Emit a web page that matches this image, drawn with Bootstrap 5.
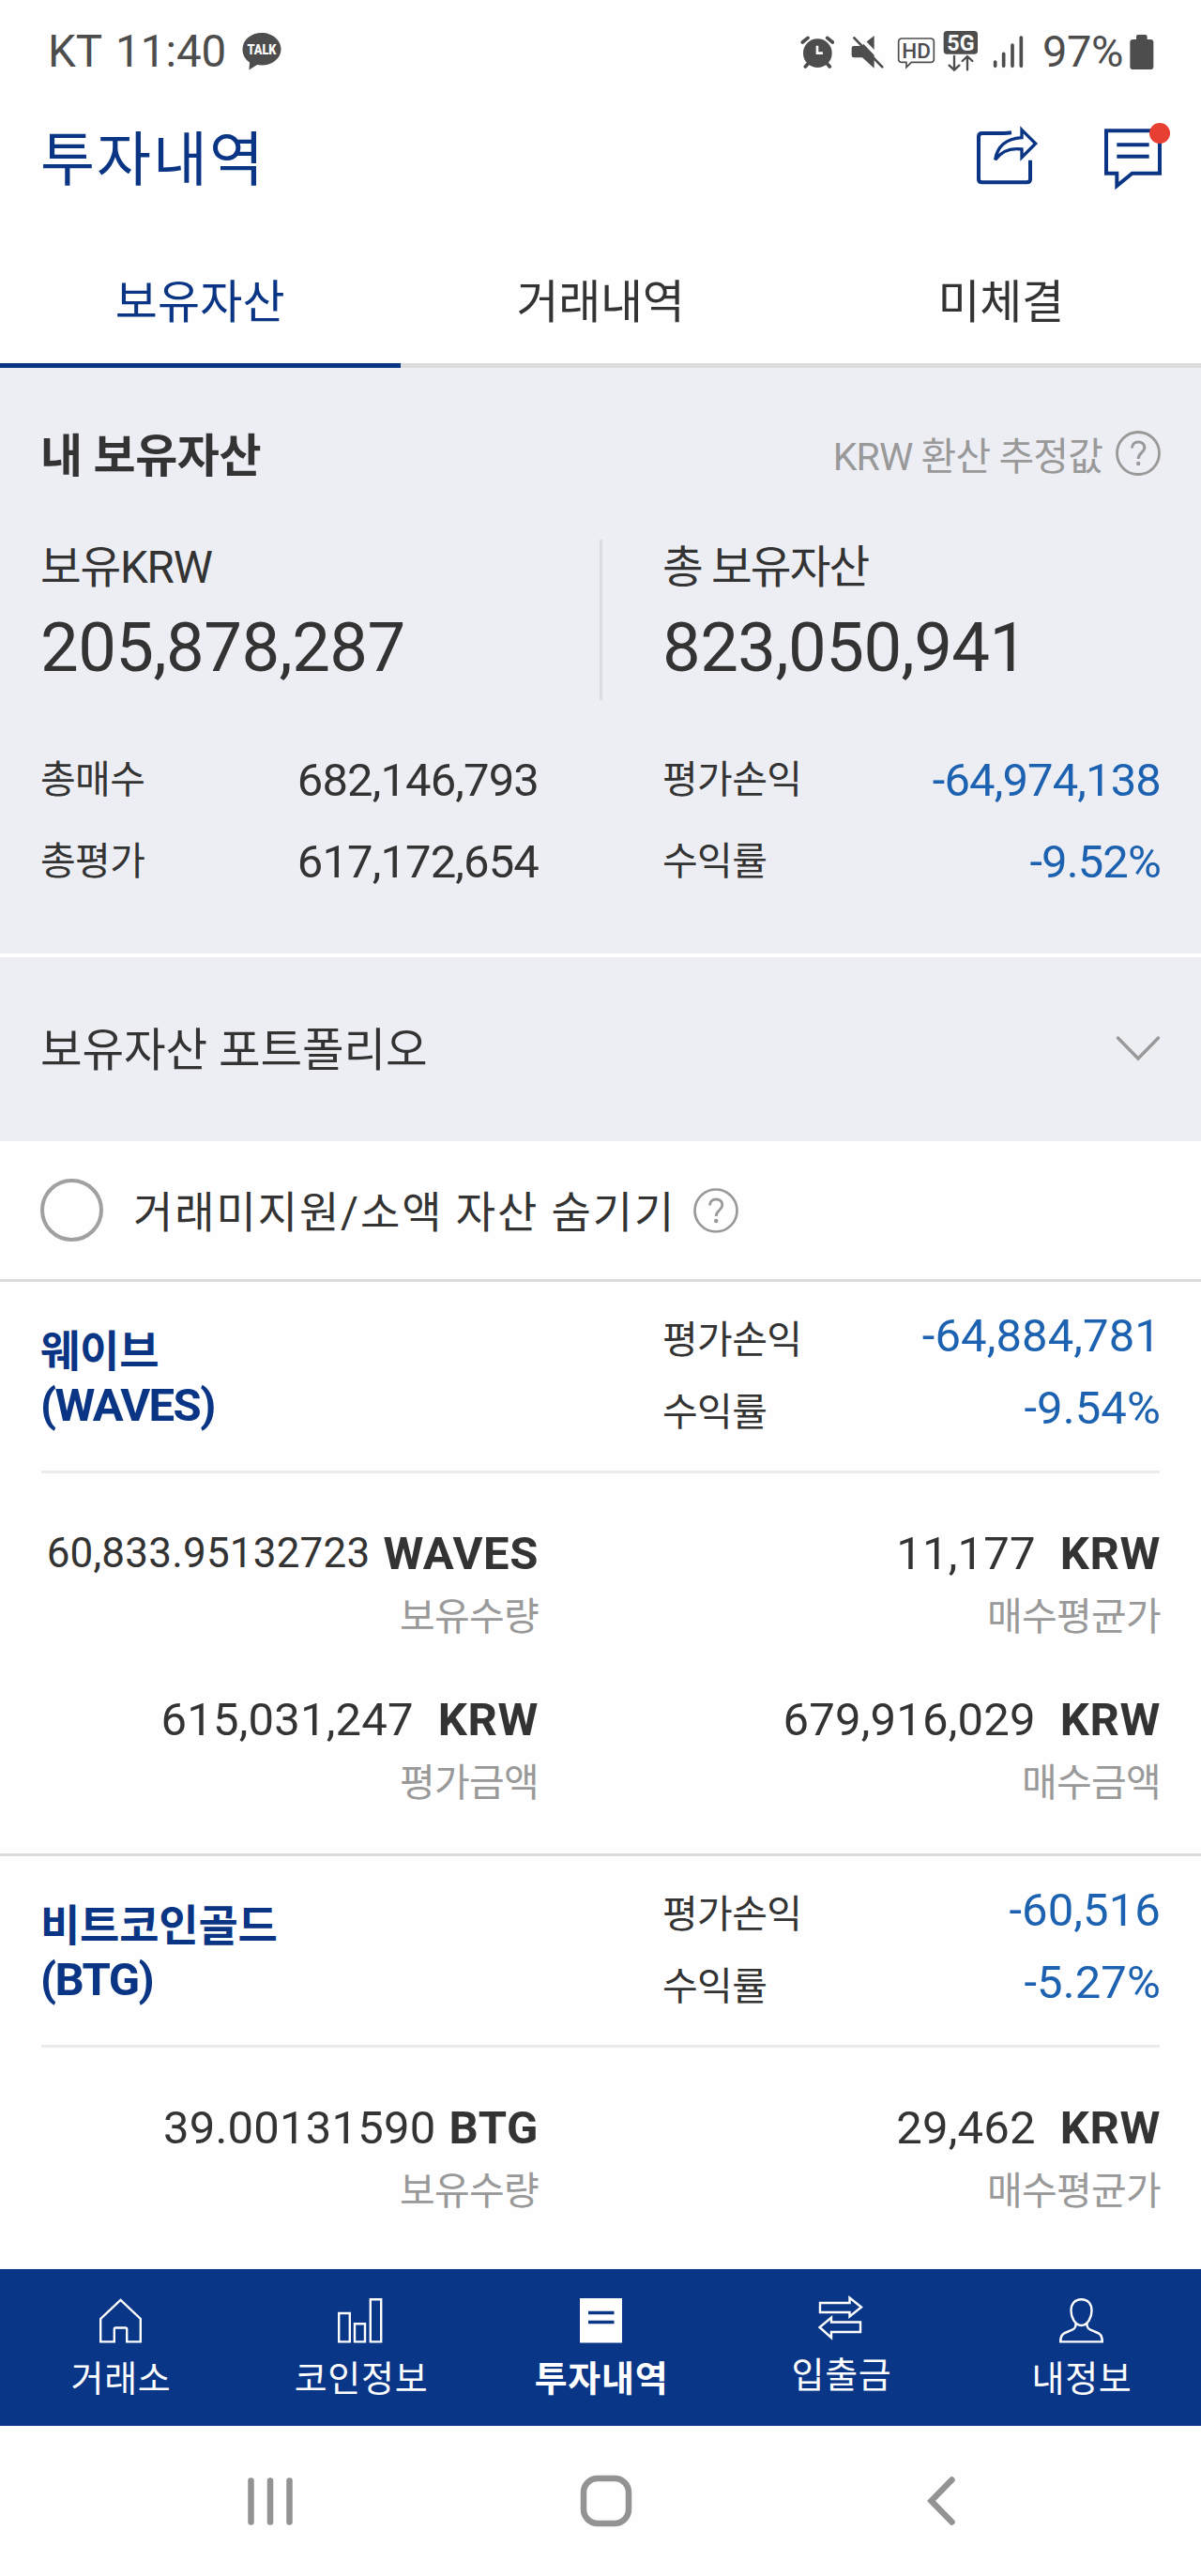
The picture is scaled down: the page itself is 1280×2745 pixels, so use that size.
<!DOCTYPE html>
<html lang="ko">
<head>
<meta charset="utf-8">
<meta name="viewport" content="width=device-width, initial-scale=1">
<title>투자내역</title>
<link href="https://cdn.jsdelivr.net/npm/bootstrap@5.3.0/dist/css/bootstrap.min.css" rel="stylesheet">
<style>
  :root { --navy:#0a3584; --ink:#333; --muted:#999; --loss:#1c62b0; --panel:#edeef4; --paper:#fefefe; --status:#4d4d4d; }
  body { width:1280px; height:2745px; margin:0; overflow:hidden; background:var(--paper); color:var(--ink);
         font-family:Roboto,"Noto Sans CJK KR",sans-serif; font-size:49px; }
  svg { display:block; flex:none; }
  a { color:inherit; text-decoration:none; }
  .status-bar { height:110px; color:var(--status); }
  .status-bar .clock { font-size:47.5px; line-height:60px; margin-left:51px; word-spacing:3px; }
  .status-bar .talk { margin-left:17px; }
  .status-bar .pct { font-size:47px; line-height:60px; width:93px; margin-left:19px; letter-spacing:-.4px; }
  .app-head { height:122px; padding:0 32px 0 43px; color:var(--navy); }
  .app-head h1 { font-size:63px; line-height:80px; font-weight:400; letter-spacing:2px; }
  .tab-strip { height:160px; }
  .tab-strip .nav-link { height:160px; padding:26px 0 0; line-height:130px; color:var(--ink); border-radius:0; border-bottom:5px solid #dcdcde; letter-spacing:-.3px; }
  .tab-strip .nav-link.active { color:var(--navy); border-color:var(--navy); letter-spacing:.2px; }
  .panel { background:var(--panel); padding:0 43px; }
  .summary { height:628px; padding-top:65px; border-bottom:4px solid #fff; }
  .summary h2 { font-size:49px; line-height:60px; font-weight:700; letter-spacing:-.4px; }
  .hint { font-size:41px; line-height:60px; color:var(--muted); letter-spacing:-.9px; }
  .half { width:531px; flex:none; }
  .balances { height:171px; margin:58px 0 42px; }
  .balances .name { font-size:47.5px; line-height:60px; letter-spacing:-1.2px; }
  .balances .name.wide { letter-spacing:-1.8px; }
  .balances .total { font-size:72.5px; line-height:86px; margin-top:13px; letter-spacing:-.6px; }
  .rule-v { width:3px; background:#dbdce0; }
  .key { font-size:41px; letter-spacing:-.6px; }
  .stat { line-height:87px; }
  .stat .num { font-size:49px; letter-spacing:-.9px; }
  .loss { color:var(--loss); }
  .portfolio { height:196px; font-size:48.5px; padding-top:4px; }
  .portfolio span { letter-spacing:-.1px; }
  .hide-row { height:147px; padding:0 43px; font-size:46px; letter-spacing:1.9px; }
  .hide-row label { padding-top:5px; margin-left:32px; line-height:60px; }
  .ring { width:67px; height:67px; border:4px solid #a0a0a0; border-radius:50%; }
  .coins { height:1055px; overflow:hidden; }
  .coin { height:612px; border-top:3px solid #dbdbdd; padding:0 43px; }
  .coin-head { height:201px; }
  .coin-name { padding-top:45px; font-size:46px; line-height:58px; font-weight:700; color:var(--navy); letter-spacing:-.2px; }
  .coin-name span { font-size:49px; letter-spacing:-1.6px; }
  .coin-stat { padding-top:19px; line-height:77px; }
  .coin-stat .key { padding-top:5px; }
  .coin-stat .num { font-size:49px; letter-spacing:.1px; }
  .coin-stat > div + div { margin-top:-5px; }
  .rule-h { height:3px; background:#ebebed; margin:0 1px; }
  .coin-body { padding-top:51px; row-gap:43px; }
  .qty { line-height:70px; font-size:49px; letter-spacing:.2px; white-space:nowrap; }
  .qty b { letter-spacing:.6px; margin-left:26px; }
  .qty b.tight { margin-left:14px; }
  .qty .long { font-size:44px; letter-spacing:.2px; vertical-align:2px; line-height:1; }
  .cap { font-size:41px; line-height:64px; color:var(--muted); letter-spacing:-.7px; }
  .bottom-bar { height:167px; background:#093687; color:#fff; font-size:38px; }
  .bottom-bar a { padding-top:31px; letter-spacing:.7px; }
  .bottom-bar span { line-height:50px; margin:13px 0 0 2px; }
  .bottom-bar a.raised { padding-top:28px; }
  .bottom-bar a.raised span { margin-top:12px; }
  .bottom-bar svg { fill:none; stroke:#fff; stroke-width:2.4; }
  .sys-nav { height:160px; padding:0 98px 0 109px; }
</style>
</head>
<body>
<header class="status-bar d-flex align-items-center">
  <div class="clock">KT 11:40</div>
  <svg class="talk" width="42" height="40" viewBox="0 0 42 40">
    <path fill="#4d4d4d" d="M21 0C9.500 0 .5 7.500 .5 17.500c0 6 3 11 7.500 14L7.500 39.500 16 34c1.500.3 3.300.5 5 .5 11.500 0 20.500-7.500 20.500-17S32.500 0 21 0z"/>
    <text x="21" y="23" text-anchor="middle" textLength="31" lengthAdjust="spacingAndGlyphs" font-family="Roboto" font-weight="900" font-size="15" fill="#fff">TALK</text>
  </svg>
  <div class="d-flex align-items-center ms-auto">
    <svg width="36" height="44" viewBox="36 39 108 132" stroke="#4d4d4d" stroke-width="11" stroke-linecap="round" fill="none">
      <circle cx="91" cy="110" r="46" fill="#4d4d4d" stroke="none"/>
      <path d="M43 75 60 61M122 61l17 14M52 153l10-11M130 153l-10-11"/>
      <path d="M90 86v24h18" stroke="#fdfdfd" stroke-width="8" stroke-linecap="butt"/>
    </svg>
    <svg class="ms-3" width="38" height="44" viewBox="193 39 114 132">
      <path fill="#4d4d4d" d="M208 87H232L273 54V158L235 124H208Q201 124 201 117V94Q201 87 208 87Z"/>
      <path d="M215 47 310 146" stroke="#fdfdfd" stroke-width="12"/>
      <path d="M209 61 299 154" stroke="#4d4d4d" stroke-width="8" stroke-linecap="round"/>
    </svg>
    <svg width="42" height="44" viewBox="348 39 126 132" style="margin-left:13px">
      <path fill="none" stroke="#4d4d4d" stroke-width="5" d="M364 63H455Q466 63 466 74V128Q466 139 455 139H394L378 155V139H364Q353 139 353 128V74Q353 63 364 63Z"/>
      <text x="410" y="125" text-anchor="middle" textLength="92" lengthAdjust="spacingAndGlyphs" font-family="Roboto" font-weight="500" font-size="66" fill="#4d4d4d">HD</text>
    </svg>
    <svg width="38" height="46" viewBox="497 34 114 138" style="margin-left:7px">
      <rect x="499" y="37" width="109" height="74" rx="11" fill="#4d4d4d"/>
      <text x="554" y="100" text-anchor="middle" textLength="88" lengthAdjust="spacingAndGlyphs" font-family="Roboto" font-weight="700" font-size="72" fill="#fdfdfd">5G</text>
      <path fill="none" stroke="#4d4d4d" stroke-width="7" stroke-linecap="round" d="M533 118V160M517 147 533 162 549 147M575 161V119M559 133 575 118 591 133"/>
    </svg>
    <svg width="34" height="44" viewBox="656 39 102 132" style="margin-left:15px" stroke="#4d4d4d" stroke-width="11" stroke-linecap="round">
      <path d="M664 138V151M691 112V151M719 84V151M747 60V151"/>
    </svg>
    <div class="pct">97%</div>
    <svg width="26" height="44" viewBox="1092 39 78 132" style="margin-right:50px" fill="#4d4d4d">
      <rect x="1093" y="66" width="75" height="96" rx="10"/><rect x="1113" y="51" width="35" height="30" rx="6"/>
    </svg>
  </div>
</header>

<div class="app-head d-flex align-items-center">
  <h1 class="m-0">투자내역</h1>
  <svg class="ms-auto" width="68" height="80" viewBox="600 336 204 240" fill="none" stroke="#0a3584">
    <path stroke-width="12" d="M714 367Q700 369 690 369H620Q609 369 609 380V516Q609 526 620 526H763Q774 526 774 516V455"/>
    <path stroke-width="10" d="M747 358 791 402 747 446V420Q692 412 662 454Q672 388 747 383Z"/>
  </svg>
  <svg width="72" height="80" viewBox="1011 336 216 240" style="margin-left:68px" fill="none" stroke="#0a3584" stroke-width="12">
    <path d="M1020 361H1191V497H1103L1054 537V497H1020ZM1054 406H1157M1054 443H1157"/>
    <circle cx="1191" cy="369" r="33" fill="#e83f33" stroke="none"/>
  </svg>
</div>

<nav class="tab-strip nav nav-justified">
  <a class="nav-item nav-link active" href="#">보유자산</a>
  <a class="nav-item nav-link" href="#">거래내역</a>
  <a class="nav-item nav-link" href="#">미체결</a>
</nav>

<section class="panel summary">
  <div class="d-flex justify-content-between align-items-center">
    <h2 class="m-0">내 보유자산</h2>
    <div class="hint d-flex align-items-center">KRW 환산 추정값
      <svg width="48" height="56" viewBox="0 0 48 56" style="margin-left:14px" fill="none"><circle cx="24" cy="24" r="22.500" stroke="#999" stroke-width="2.800"/><path d="M17.500 18.500c0-4 2.700-6.500 6.700-6.500s6.600 2.300 6.600 6c0 5.500-6.600 5.500-6.600 12" stroke="#999" stroke-width="3"/><circle cx="24.200" cy="35" r="2.200" fill="#999"/></svg>
    </div>
  </div>
  <div class="balances d-flex justify-content-between">
    <div class="half"><div class="name">보유KRW</div><div class="total">205,878,287</div></div>
    <div class="rule-v"></div>
    <div class="half"><div class="name wide">총 보유자산</div><div class="total">823,050,941</div></div>
  </div>
  <div class="d-flex justify-content-between">
    <div class="half">
      <div class="stat d-flex justify-content-between"><span class="key">총매수</span><span class="num">682,146,793</span></div>
      <div class="stat d-flex justify-content-between"><span class="key">총평가</span><span class="num">617,172,654</span></div>
    </div>
    <div class="half">
      <div class="stat d-flex justify-content-between"><span class="key">평가손익</span><span class="num loss">-64,974,138</span></div>
      <div class="stat d-flex justify-content-between"><span class="key">수익률</span><span class="num loss">-9.52%</span></div>
    </div>
  </div>
</section>

<section class="panel portfolio d-flex align-items-center justify-content-between">
  <span>보유자산 포트폴리오</span>
  <svg width="48" height="34" viewBox="0 0 48 34"><path d="M2.500 3 24 25 45.500 3" fill="none" stroke="#999" stroke-width="3.400" stroke-linecap="round"/></svg>
</section>

<div class="hide-row d-flex align-items-center">
  <span class="ring"></span>
  <label>거래미지원/소액 자산 숨기기</label>
  <svg width="48" height="48" viewBox="0 0 48 48" style="margin-left:19px" fill="none"><circle cx="24" cy="24" r="22.500" stroke="#999" stroke-width="2.700"/><path d="M17.500 18.500c0-4 2.700-6.500 6.700-6.500s6.600 2.300 6.600 6c0 5.500-6.600 5.500-6.600 12" stroke="#999" stroke-width="2.800"/><circle cx="24.200" cy="35" r="2.200" fill="#999"/></svg>
</div>

<main class="coins">
  <article class="coin">
    <div class="coin-head d-flex justify-content-between">
      <div class="coin-name half">웨이브<br><span>(WAVES)</span></div>
      <div class="coin-stat half">
        <div class="d-flex justify-content-between"><span class="key">평가손익</span><span class="num loss">-64,884,781</span></div>
        <div class="d-flex justify-content-between"><span class="key">수익률</span><span class="num loss">-9.54%</span></div>
      </div>
    </div>
    <div class="rule-h"></div>
    <div class="coin-body d-flex flex-wrap justify-content-between text-end">
      <div class="half"><div class="qty"><span class="long">60,833.95132723</span><b class="tight">WAVES</b></div><div class="cap">보유수량</div></div>
      <div class="half"><div class="qty">11,177<b>KRW</b></div><div class="cap">매수평균가</div></div>
      <div class="half"><div class="qty">615,031,247<b>KRW</b></div><div class="cap">평가금액</div></div>
      <div class="half"><div class="qty">679,916,029<b>KRW</b></div><div class="cap">매수금액</div></div>
    </div>
  </article>
  <article class="coin">
    <div class="coin-head d-flex justify-content-between">
      <div class="coin-name half">비트코인골드<br><span>(BTG)</span></div>
      <div class="coin-stat half">
        <div class="d-flex justify-content-between"><span class="key">평가손익</span><span class="num loss">-60,516</span></div>
        <div class="d-flex justify-content-between"><span class="key">수익률</span><span class="num loss">-5.27%</span></div>
      </div>
    </div>
    <div class="rule-h"></div>
    <div class="coin-body d-flex flex-wrap justify-content-between text-end">
      <div class="half"><div class="qty">39.00131590<b class="tight">BTG</b></div><div class="cap">보유수량</div></div>
      <div class="half"><div class="qty">29,462<b>KRW</b></div><div class="cap">매수평균가</div></div>
    </div>
  </article>
</main>

<nav class="bottom-bar row row-cols-5 g-0 text-center">
  <a class="d-flex flex-column align-items-center" href="#">
    <svg width="45" height="48" viewBox="0 0 45 48"><path d="M15.800 46.400H1.200V22L22.500 1.800 43.800 22V46.400H29.200V33q0-1.500-1.500-1.500H17.300q-1.500 0-1.500 1.500Z"/></svg>
    <span>거래소</span></a>
  <a class="d-flex flex-column align-items-center" href="#">
    <svg width="48" height="48" viewBox="0 0 48 48"><path d="M1.200 16H12.800V46.400H1.200ZM18 27.200H29V46.400H18ZM34.800 1.200H46.200V46.400H34.800Z"/></svg>
    <span>코인정보</span></a>
  <a class="d-flex flex-column align-items-center fw-bold" href="#">
    <svg width="45" height="48" viewBox="0 0 45 48"><path d="M0 0H45V47.500H0Z" fill="#fff" stroke="none"/><path d="M9 15.500H36.500M9 25.500H36.500" stroke="#093687" stroke-width="3.600"/></svg>
    <span>투자내역</span></a>
  <a class="d-flex flex-column align-items-center raised" href="#">
    <svg width="48" height="48" viewBox="0 0 48 48"><path d="M2 8H33.500V2.500L46 12.500 33.500 22.500V18H2ZM45 28.500V39H14V45L1.500 34 14 23.500V28.500Z"/></svg>
    <span>입출금</span></a>
  <a class="d-flex flex-column align-items-center" href="#">
    <svg width="47" height="48" viewBox="0 0 47 48"><path d="M23.500 1.200c-7 0-11 5-11 12 0 7 4 15.800 11 15.800s11-8.800 11-15.800c0-7-4-12-11-12zM17.500 26.500V28.500c0 4-3 5-8 7C4 37.500 1.200 39 1.200 46.400H45.800C45.800 39 43 37.500 37.500 35.500c-5-2-8-3-8-7V26.500"/></svg>
    <span>내정보</span></a>
</nav>

<nav class="sys-nav d-flex align-items-center text-center">
  <div class="col d-flex justify-content-center"><svg width="48" height="51" viewBox="0 0 48 51" stroke="#939393" stroke-width="6.500" stroke-linecap="round"><path d="M3.500 3.500V47.500M24 3.500V47.500M44.500 3.500V47.500"/></svg></div>
  <div class="col d-flex justify-content-center"><svg width="56" height="56" viewBox="0 0 56 56"><rect x="4" y="4" width="48" height="48" rx="15" fill="none" stroke="#939393" stroke-width="6.500"/></svg></div>
  <div class="col d-flex justify-content-center"><svg width="30" height="52" viewBox="0 0 30 52"><path d="M26.500 3.500 4.500 26 26.500 48.500" fill="none" stroke="#939393" stroke-width="6.500" stroke-linecap="round"/></svg></div>
</nav>
<script src="https://cdn.jsdelivr.net/npm/bootstrap@5.3.0/dist/js/bootstrap.bundle.min.js"></script>
</body>
</html>
